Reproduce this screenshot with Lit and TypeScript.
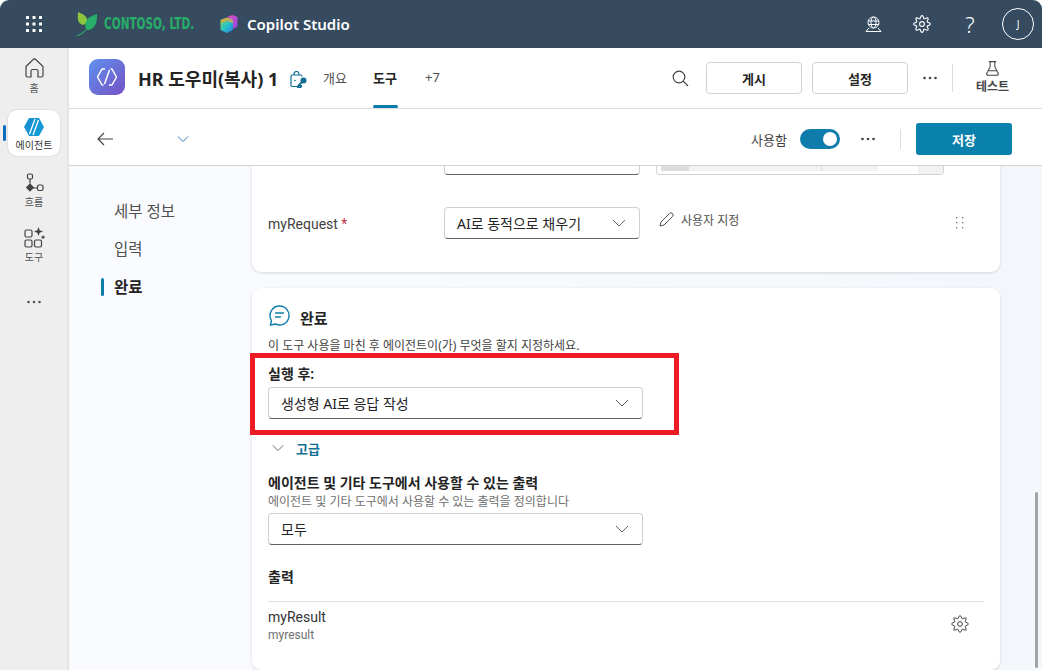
import { LitElement, html, css, svg } from "lit";
import { customElement } from "lit/decorators.js";

// 8 lobed cog outline, used in the top bar and on the output row
function gear(size: number, color: string, sw = 1) {
  let d = "";
  for (let i = 0; i < 64; i++) {
    const a = (i / 64) * Math.PI * 2;
    const r = 7 + 1.4 * Math.cos(a * 8);
    d += `${i ? "L" : "M"}${(10 + r * Math.cos(a)).toFixed(2)} ${(10 + r * Math.sin(a)).toFixed(2)}`;
  }
  return html`<svg width=${size} height=${size} viewBox="0 0 20 20" fill="none" stroke=${color} stroke-width=${sw} stroke-linejoin="round">
    <path d="${d}Z" /><circle cx="10" cy="10" r="2.4" />
  </svg>`;
}

const chevron = (color = "#616161", w = 14) =>
  html`<svg width=${w} height="8" viewBox="0 0 14 8" fill="none" stroke=${color} stroke-width="1"><path d="M1 1l6 6 6-6" /></svg>`;

const dots = (color = "#424242") =>
  html`<svg width="16" height="4" viewBox="0 0 16 4" fill=${color}><circle cx="2.5" cy="2" r="1.3" /><circle cx="8" cy="2" r="1.3" /><circle cx="13.5" cy="2" r="1.3" /></svg>`;

const waffle = svg`${[0, 1, 2].flatMap((r) =>
  [0, 1, 2].map((c) => svg`<rect x=${c * 6.5} y=${r * 6.5} width="3" height="3" rx=".6" fill="#fff" />`)
)}`;

@customElement("app-root")
export class AppRoot extends LitElement {
  static styles = css`
    :host {
      display: block;
      width: 1042px;
      height: 670px;
      overflow: hidden;
      font-family: "Noto Sans", "Noto Sans CJK KR", sans-serif;
      color: #242424;
      background: #fff;
    }
    .app {
      height: 670px;
      display: flex;
      flex-direction: column;
      border-radius: 9px 9px 0 0;
      overflow: hidden;
    }
    /* top bar */
    .topbar {
      height: 48px;
      flex: none;
      background: #364b60;
      display: flex;
      align-items: center;
      color: #fff;
    }
    .waffle { margin-left: 26px; width: 16px; height: 16px; display: flex; }
    .brand { margin-left: 34px; display: flex; align-items: center; }
    .brand-name {
      margin-left: 7px;
      font-family: "DejaVu Sans", sans-serif;
      font-weight: 700;
      font-size: 15px;
      color: #27ae68;
      white-space: nowrap;
      width: 91px;
      transform: scaleX(0.7);
      transform-origin: left center;
    }
    .cube { margin-left: 25px; display: flex; }
    .product { margin-left: 9px; font-size: 15px; font-weight: 600; }
    .top-actions { margin-left: auto; display: flex; align-items: center; }
    .top-actions > * { flex: none; }
    .globe { margin-right: 30px; display: flex; }
    .topgear { margin-right: 33px; display: flex; }
    .help { margin-right: 27px; font-size: 22px; font-weight: 300; line-height: 24px; width: 10px; text-align: center; display: flex; justify-content: center; }
    .avatar {
      width: 30px;
      height: 30px;
      border: 1px solid #fff;
      border-radius: 50%;
      margin-right: 8px;
      font-size: 10px;
      display: flex;
      align-items: center;
      justify-content: center;
    }
    .below { flex: 1; display: flex; min-height: 0; }
    /* left rail */
    .rail {
      width: 69px;
      flex: none;
      background: #eeeeee;
      box-shadow: inset -3px 0 3px -2px rgba(0, 0, 0, 0.08);
      display: flex;
      flex-direction: column;
      align-items: center;
      padding-top: 10px;
      box-sizing: border-box;
      position: relative;
    }
    .rail-item {
      width: 52px;
      display: flex;
      flex-direction: column;
      align-items: center;
      font-size: 10px;
      line-height: 14px;
      color: #505050;
      margin-right: 1px;
    }
    .rail-item svg { display: block; }
    .rail-item.home { height: 38px; margin-bottom: 14px; }
    .rail-item.home span { margin-top: 3px; }
    .rail-item.active {
      height: 46px;
      box-sizing: border-box;
      padding-top: 8px;
      background: #fff;
      border-radius: 9px;
      box-shadow: 0 0 2px rgba(0, 0, 0, 0.18);
      color: #333;
      margin-bottom: 17px;
      position: relative;
    }
    .rail-item.active span { margin-top: 2px; }
    .rail-item.active::before {
      content: "";
      position: absolute;
      left: -5px;
      top: 15px;
      width: 3px;
      height: 16px;
      border-radius: 2px;
      background: #0f6cbd;
    }
    .rail-item.flow { height: 38px; margin-bottom: 16px; }
    .rail-item.flow span { margin-top: 2px; }
    .rail-item.tool { height: 38px; margin-bottom: 35px; }
    .rail-item.tool span { margin-top: 2px; }
    .rail-more { display: flex; margin-right: 1px; }
    /* main column */
    .main { flex: 1; min-width: 0; display: flex; flex-direction: column; }
    .head {
      height: 61px;
      flex: none;
      box-sizing: border-box;
      border-bottom: 1px solid #dcdcdc;
      display: flex;
      align-items: center;
      background: #fff;
    }
    .tile {
      margin-left: 20px;
      width: 36px;
      height: 36px;
      border-radius: 9px;
      background: linear-gradient(135deg, #5e92ee, #7650c4);
      display: flex;
      align-items: center;
      justify-content: center;
      margin-top: -2px;
    }
    .title { margin-left: 13px; font-size: 18px; font-weight: 700; white-space: nowrap; width: 141px; }
    .lock { margin-left: 11px; display: flex; margin-top: 3px; }
    .tabs { margin-left: 16px; display: flex; align-self: stretch; font-size: 13px; color: #505050; }
    .tab { display: flex; align-items: center; padding-bottom: 2px; position: relative; white-space: nowrap; }
    .tab.t1 { width: 50px; }
    .tab.t2 { width: 52px; color: #242424; font-weight: 700; }
    .tab.t2::after {
      content: "";
      position: absolute;
      left: 0;
      bottom: 0;
      width: 25px;
      height: 3px;
      border-radius: 2px;
      background: #0f7dab;
    }
    .head-actions { margin-left: auto; margin-right: 10px; display: flex; align-items: center; }
    .search { display: flex; margin-right: 17px; }
    .btn {
      width: 96px;
      height: 32px;
      box-sizing: border-box;
      border: 1px solid #d1d1d1;
      border-radius: 4px;
      display: flex;
      align-items: center;
      justify-content: center;
      font-size: 13px;
      font-weight: 700;
      margin-right: 10px;
    }
    .btn + .btn { margin-right: 14px; }
    .vr { width: 1px; height: 28px; background: #dcdcdc; }
    .head-actions .more { display: flex; margin-right: 14px; }
    .test {
      width: 79px;
      display: flex;
      flex-direction: column;
      align-items: center;
      font-size: 12px;
      font-weight: 700;
      line-height: 16px;
      color: #444;
      gap: 3px;
      margin-top: -1px;
    }
    .bar {
      height: 57px;
      flex: none;
      box-sizing: border-box;
      border-bottom: 1px solid #d4d4d4;
      display: flex;
      align-items: center;
      background: #fff;
      padding-top: 4px;
    }
    .back { margin-left: 28px; display: flex; }
    .down { margin-left: 64px; display: flex; }
    .bar-right { margin-left: auto; display: flex; align-items: center; margin-right: 30px; }
    .enabled { font-size: 13px; color: #424242; margin-right: 13px; }
    .toggle {
      width: 40px;
      height: 20px;
      border-radius: 10px;
      background: #0f7dab;
      display: flex;
      align-items: center;
      justify-content: flex-end;
      padding-right: 3px;
      box-sizing: border-box;
      margin-right: 20px;
    }
    .toggle i { width: 14px; height: 14px; border-radius: 50%; background: #fff; }
    .bar-right .more { display: flex; margin-right: 24px; }
    .bar-right .vr { height: 20px; margin-right: 15px; }
    .save {
      width: 96px;
      height: 32px;
      border-radius: 3px;
      background: #0a80ad;
      color: #fff;
      font-size: 13px;
      font-weight: 700;
      display: flex;
      align-items: center;
      justify-content: center;
    }
    /* page below the bars */
    .page {
      flex: 1;
      min-height: 0;
      overflow: hidden;
      display: flex;
      background: linear-gradient(90deg, #fafbfe, #f3f7fb);
      position: relative;
    }
    .side {
      width: 183px;
      flex: none;
      box-sizing: border-box;
      padding: 35px 0 0 45px;
      display: flex;
      flex-direction: column;
      gap: 17px;
      font-size: 15.5px;
      line-height: 21px;
      color: #505050;
    }
    .side .on { color: #242424; font-weight: 700; position: relative; }
    .side .on::before {
      content: "";
      position: absolute;
      left: -13px;
      top: 1px;
      width: 3px;
      height: 18px;
      border-radius: 2px;
      background: #0f7dab;
    }
    .cards { width: 748px; flex: none; display: flex; flex-direction: column; gap: 16px; }
    .card {
      background: #fff;
      border-radius: 9px;
      box-shadow: 0 1px 3px rgba(0, 0, 0, 0.14);
      padding: 0 16px;
      flex: none;
      position: relative;
    }
    .card.first { margin-top: -40px; padding-top: 0; height: 146px; box-sizing: border-box; }
    .row { display: flex; align-items: center; }
    .row.clipped { height: 49px; align-items: flex-start; }
    .row.clipped .name { font-size: 14px; width: 176px; padding-top: 22px; line-height: 20px; }
    .row.clipped .select { height: 49px; border-bottom-color: #616161; width: 196px; }
    .fill {
      margin-left: 16px;
      width: 288px;
      height: 49px;
      box-sizing: border-box;
      border: 1px solid #d1d1d1;
      border-top: 0;
      border-radius: 0 0 4px 4px;
      padding: 0 0 3px 4px;
      display: flex;
      align-items: flex-end;
    }
    .chip { height: 40px; background: #f3f2f1; font-size: 13px; line-height: 20px; display: flex; align-items: flex-end; box-sizing: border-box; padding-bottom: 3px; }
    .chip.c1 { width: 28px; background: #dedcda; }
    .chip.c2 { width: 133px; padding-right: 12px; justify-content: center; border-right: 1px solid #ddd; }
    .chip.c3 { width: 56px; padding-left: 8px; justify-content: center; }
    .chip.c4 { width: 25px; margin-left: 40px; align-self: stretch; height: auto; margin-bottom: -3px; margin-right: -1px; }
    .row.req { margin-top: 32px; height: 32px; }
    .name { width: 176px; font-family: Roboto, "Noto Sans CJK KR", sans-serif; font-size: 14px; color: #424242; flex: none; }
    .row.req .name { padding-top: 2px; }
    .name b { color: #c4314b; font-weight: 400; }
    .select {
      box-sizing: border-box;
      height: 32px;
      border: 1px solid #d1d1d1;
      border-bottom-color: #616161;
      border-radius: 4px;
      display: flex;
      align-items: center;
      justify-content: space-between;
      padding: 0 13px 0 12px;
      font-size: 14px;
      background: #fff;
      flex: none;
    }
    .select.narrow { width: 196px; }
    .select.wide { width: 375px; }
    .custom { margin-left: 19px; display: flex; align-items: center; gap: 7px; font-size: 12px; color: #505050; margin-top: -7px; }
    .grip { margin-left: auto; margin-right: 20px; display: flex; }
    .card.done { padding-top: 17px; height: 382px; box-sizing: border-box; }
    .done-head { display: flex; align-items: center; height: 24px; gap: 10px; margin-left: 1px; font-size: 15px; font-weight: 700; }
    .done-head svg { margin-top: -4px; }
    .hint { font-size: 12px; line-height: 16px; color: #424242; margin-top: 9px; }
    .label { font-size: 14px; font-weight: 600; line-height: 20px; margin-top: 10px; margin-bottom: 3px; }
    .adv {
      display: flex;
      align-items: center;
      margin-top: 19px;
      height: 20px;
      font-size: 13px;
      font-weight: 700;
      color: #0f6f94;
      gap: 12px;
      padding-left: 4px;
    }
    .outs { margin-top: 15px; font-size: 14px; font-weight: 600; line-height: 20px; }
    .outs-hint { font-size: 12px; line-height: 17px; color: #707070; margin-bottom: 3px; }
    .out-title { margin-top: 22px; font-size: 14px; font-weight: 600; line-height: 20px; }
    .out-row {
      margin-top: 14px;
      border-top: 1px solid #e0e0e0;
      padding-top: 5px;
      display: flex;
      justify-content: space-between;
      width: 716px;
    }
    .out-name { font-family: Roboto, sans-serif; font-size: 14px; line-height: 20px; color: #333; }
    .out-sub { font-family: Roboto, sans-serif; font-size: 12px; line-height: 17px; color: #707070; }
    .out-row .cog { margin: 7px 14px 0 0; display: flex; }
    /* annotation laid over the card */
    .callout {
      position: absolute;
      left: -2px;
      top: 65px;
      width: 429px;
      height: 82px;
      box-sizing: border-box;
      border: 5px solid #ed1c24;
      pointer-events: none;
    }
    .scrollbar {
      position: absolute;
      left: 966px;
      top: 326px;
      width: 3px;
      height: 176px;
      border-radius: 2px;
      background: #a3a3a3;
    }
  `;

  render() {
    return html`<div class="app">
      <div class="topbar">
        <div class="waffle"><svg width="16" height="16" viewBox="0 0 16 16">${waffle}</svg></div>
        <div class="brand">
          <svg width="21" height="25" viewBox="0 0 21 25">
            <path d="M2 0c3 1.500 8 3 9 7 .4 2-.5 4-2 5-1 .8-2 1-2 1-1-.5-4-1.500-5-5C1.500 5 2 2 2 0z" fill="#8cc63f" />
            <path d="M21 2c0 5 0 10-4 14-2 2-5 2.500-7 1.500C8.500 14 9.500 9 12 6.500 14.500 4 18 3 21 2z" fill="#27ae68" />
            <path d="M0 24c3-1.500 7-3.500 10-6.500l.6.600C8 21 4 23.500.5 24.600z" fill="#27ae68" />
          </svg>
          <span class="brand-name">CONTOSO, LTD.</span>
        </div>
        <div class="cube">
          <svg width="18" height="18" viewBox="0 0 18 18">
            <defs>
              <linearGradient id="cu" x1="0" y1="0" x2="1" y2="1">
                <stop offset="0" stop-color="#8fd14f" /><stop offset=".5" stop-color="#26c6c6" /><stop offset="1" stop-color="#2f7be0" />
              </linearGradient>
              <linearGradient id="cb" x1="0" y1="0" x2="1" y2="1">
                <stop offset="0" stop-color="#e64fc0" /><stop offset="1" stop-color="#8a4be0" />
              </linearGradient>
            </defs>
            <path d="M8 1.500L12.500 0 16.500 1.500a1.500 1.500 0 0 1 1 1.500v8a1.500 1.500 0 0 1-1 1.400L12 14z" fill="url(#cb)" />
            <path d="M1.500 4.500L7 2.500l5 2a1.500 1.500 0 0 1 1 1.500v8a1.500 1.500 0 0 1-1 1.400L7 18 1.500 15.500a1.500 1.500 0 0 1-1-1.500V6a1.500 1.500 0 0 1 1-1.500z" fill="url(#cu)" />
            <path d="M7 2.500l5 2a1.500 1.500 0 0 1 1 1.500v2L7 6 1 8V6a1.500 1.500 0 0 1 .5-1.500z" fill="#f2a33c" opacity=".7" />
          </svg>
        </div>
        <span class="product">Copilot Studio</span>
        <div class="top-actions">
          <div class="globe">
            <svg width="17" height="17" viewBox="0 0 17 17" fill="none" stroke="#fff" stroke-width="1">
              <circle cx="8.500" cy="6.500" r="5.500" /><ellipse cx="8.500" cy="6.500" rx="2.500" ry="5.500" />
              <path d="M3.200 5h10.600M3.200 8.500h10.600M4 12l-3 3.500h15L13 12" />
            </svg>
          </div>
          <div class="topgear">${gear(20, "#fff", 1.1)}</div>
          <div class="help">?</div>
          <div class="avatar">J</div>
        </div>
      </div>
      <div class="below">
        <nav class="rail">
          <div class="rail-item home">
            <svg width="19" height="20" viewBox="0 0 19 20" fill="none" stroke="#424242" stroke-width="1.200">
              <path d="M1 8.500L8.200 1.500a1.800 1.800 0 0 1 2.600 0L18 8.500V17.500a1.500 1.500 0 0 1-1.500 1.500H13V13a1.500 1.500 0 0 0-1.500-1.500h-4A1.500 1.500 0 0 0 6 13v6H2.500A1.500 1.500 0 0 1 1 17.500z" />
            </svg>
            <span>홈</span>
          </div>
          <div class="rail-item active">
            <svg width="20" height="18" viewBox="0 0 20 18">
              <defs>
                <linearGradient id="ag" x1="0" y1="0" x2="1" y2="1"><stop offset="0" stop-color="#1b8ad0" /><stop offset="1" stop-color="#10a0d8" /></linearGradient>
              </defs>
              <path d="M5 0h10l5 9-5 9H5L0 9z" fill="url(#ag)" />
              <path d="M11 1L5.500 16M14.500 2L9 17" stroke="#fff" stroke-width="1.300" fill="none" />
            </svg>
            <span>에이전트</span>
          </div>
          <div class="rail-item flow">
            <svg width="20" height="20" viewBox="0 0 20 20" fill="none" stroke="#424242" stroke-width="1.200">
              <rect x="3.500" y="1" width="5" height="5" rx="1.500" /><path d="M6 6v4.500M9 15h4" />
              <path d="M6 10.500l3.300 3.300L6 17.100 2.700 13.800z" fill="#424242" transform="translate(0 .700)" />
              <rect x="13.500" y="12" width="5.500" height="5.500" rx="1.500" />
            </svg>
            <span>흐름</span>
          </div>
          <div class="rail-item tool">
            <svg width="21" height="21" viewBox="0 0 21 21" fill="none" stroke="#424242" stroke-width="1.200">
              <rect x="1" y="3" width="7" height="7" rx="1.500" /><rect x="1" y="13" width="7" height="7" rx="1.500" /><rect x="10.500" y="13" width="7" height="7" rx="1.500" />
              <path d="M14.500 0l1.200 3.300L19 4.500l-3.300 1.200-1.200 3.300-1.200-3.300L10 4.500l3.300-1.200z" fill="#424242" stroke="none" />
              <path d="M19 8.500v3.500M17.300 10.200h3.500" />
            </svg>
            <span>도구</span>
          </div>
          <div class="rail-more">${dots("#555")}</div>
        </nav>
        <div class="main">
          <header class="head">
            <div class="tile">
              <svg width="22" height="18" viewBox="0 0 22 18" fill="none" stroke="#fff" stroke-width="1.500" stroke-linejoin="round">
                <path d="M9 1H6L1.500 9 6 17h1.500M13 17h3l4.500-8L16 1h-1.500M13.500 2L8.500 16" />
              </svg>
            </div>
            <div class="title">HR 도우미(복사) 1</div>
            <div class="lock">
              <svg width="17" height="17" viewBox="0 0 17 17" fill="none" stroke="#0f6f94" stroke-width="1.200">
                <path d="M4 4V3a2.500 2.500 0 0 1 5 0v1M7 15.500H2.500A1.500 1.500 0 0 1 1 14V5.500A1.500 1.500 0 0 1 2.500 4h8A1.500 1.500 0 0 1 12 5.500" />
                <circle cx="5" cy="9.500" r=".8" fill="#0f6f94" stroke="none" />
                <circle cx="13.500" cy="9.500" r="3" fill="#0f6f94" stroke="none" />
                <path d="M12 11L8 15v1.500h2.500V15h1.500" stroke-width="1.800" />
              </svg>
            </div>
            <div class="tabs">
              <div class="tab t1">개요</div>
              <div class="tab t2">도구</div>
              <div class="tab">+7</div>
            </div>
            <div class="head-actions">
              <div class="search">
                <svg width="17" height="17" viewBox="0 0 17 17" fill="none" stroke="#424242" stroke-width="1.200"><circle cx="7" cy="7" r="5.800" /><path d="M11.200 11.200L16 16" /></svg>
              </div>
              <div class="btn">게시</div>
              <div class="btn">설정</div>
              <div class="more">${dots()}</div>
              <div class="vr"></div>
              <div class="test">
                <svg width="13" height="15" viewBox="0 0 14 16" fill="none" stroke="#424242" stroke-width="1.100"><path d="M3 .6h8M4.500 .6V6L1 13a1.500 1.500 0 0 0 1.400 2.300h9.200A1.500 1.500 0 0 0 13 13L9.500 6V.6M3 10.500h8" /></svg>
                <span>테스트</span>
              </div>
            </div>
          </header>
          <div class="bar">
            <div class="back">
              <svg width="16" height="14" viewBox="0 0 16 14" fill="none" stroke="#424242" stroke-width="1.100"><path d="M7 1L1 7l6 6M1 7h15" /></svg>
            </div>
            <div class="down">${chevron("#0f5fa8", 12)}</div>
            <div class="bar-right">
              <span class="enabled">사용함</span>
              <div class="toggle"><i></i></div>
              <div class="more">${dots()}</div>
              <div class="vr"></div>
              <div class="save">저장</div>
            </div>
          </div>
          <div class="page">
            <div class="side">
              <div>세부 정보</div>
              <div>입력</div>
              <div class="on">완료</div>
            </div>
            <div class="cards">
              <section class="card first">
                <div class="row clipped">
                  <div class="name">myInput</div>
                  <div class="select"></div>
                  <div class="fill">
                    <div class="chip c1"></div>
                    <div class="chip c2">Company</div>
                    <div class="chip c3">Eng</div>
                    <div class="chip c4"></div>
                  </div>
                </div>
                <div class="row req">
                  <div class="name">myRequest <b>*</b></div>
                  <div class="select narrow"><span>AI로 동적으로 채우기</span>${chevron()}</div>
                  <div class="custom">
                    <svg width="15" height="15" viewBox="0 0 15 15" fill="none" stroke="#505050" stroke-width="1"><path d="M1 14l1-4L10.500 1.500a1.800 1.800 0 0 1 3 3L5 13z" /></svg>
                    <span>사용자 지정</span>
                  </div>
                  <div class="grip">
                    <svg width="8" height="12" viewBox="0 0 8 12" fill="#707070"><rect x="0" y="0" width="1.300" height="1.300" /><rect x="6" y="0" width="1.300" height="1.300" /><rect x="0" y="5" width="1.300" height="1.300" /><rect x="6" y="5" width="1.300" height="1.300" /><rect x="0" y="10" width="1.300" height="1.300" /><rect x="6" y="10" width="1.300" height="1.300" /></svg>
                  </div>
                </div>
              </section>
              <section class="card done">
                <div class="done-head">
                  <svg width="21" height="21" viewBox="0 0 21 21" fill="none" stroke="#0f7dab" stroke-width="1.400" stroke-linecap="round">
                    <path d="M10.500 1a9.500 9.500 0 1 1-4.200 18L1.500 20l1-4.500A9.500 9.500 0 0 1 10.500 1z" /><path d="M6.500 8h8M6.500 12h5" />
                  </svg>
                  <span>완료</span>
                </div>
                <div class="hint">이 도구 사용을 마친 후 에이전트이(가) 무엇을 할지 지정하세요.</div>
                <div class="label">실행 후:</div>
                <div class="select wide"><span>생성형 AI로 응답 작성</span>${chevron()}</div>
                <div class="adv">${chevron("#505050", 12)}<span>고급</span></div>
                <div class="outs">에이전트 및 기타 도구에서 사용할 수 있는 출력</div>
                <div class="outs-hint">에이전트 및 기타 도구에서 사용할 수 있는 출력을 정의합니다</div>
                <div class="select wide"><span>모두</span>${chevron()}</div>
                <div class="out-title">출력</div>
                <div class="out-row">
                  <div>
                    <div class="out-name">myResult</div>
                    <div class="out-sub">myresult</div>
                  </div>
                  <div class="cog">${gear(20, "#424242")}</div>
                </div>
                <div class="callout"></div>
              </section>
            </div>
            <div class="scrollbar"></div>
          </div>
        </div>
      </div>
    </div>`;
  }
}
